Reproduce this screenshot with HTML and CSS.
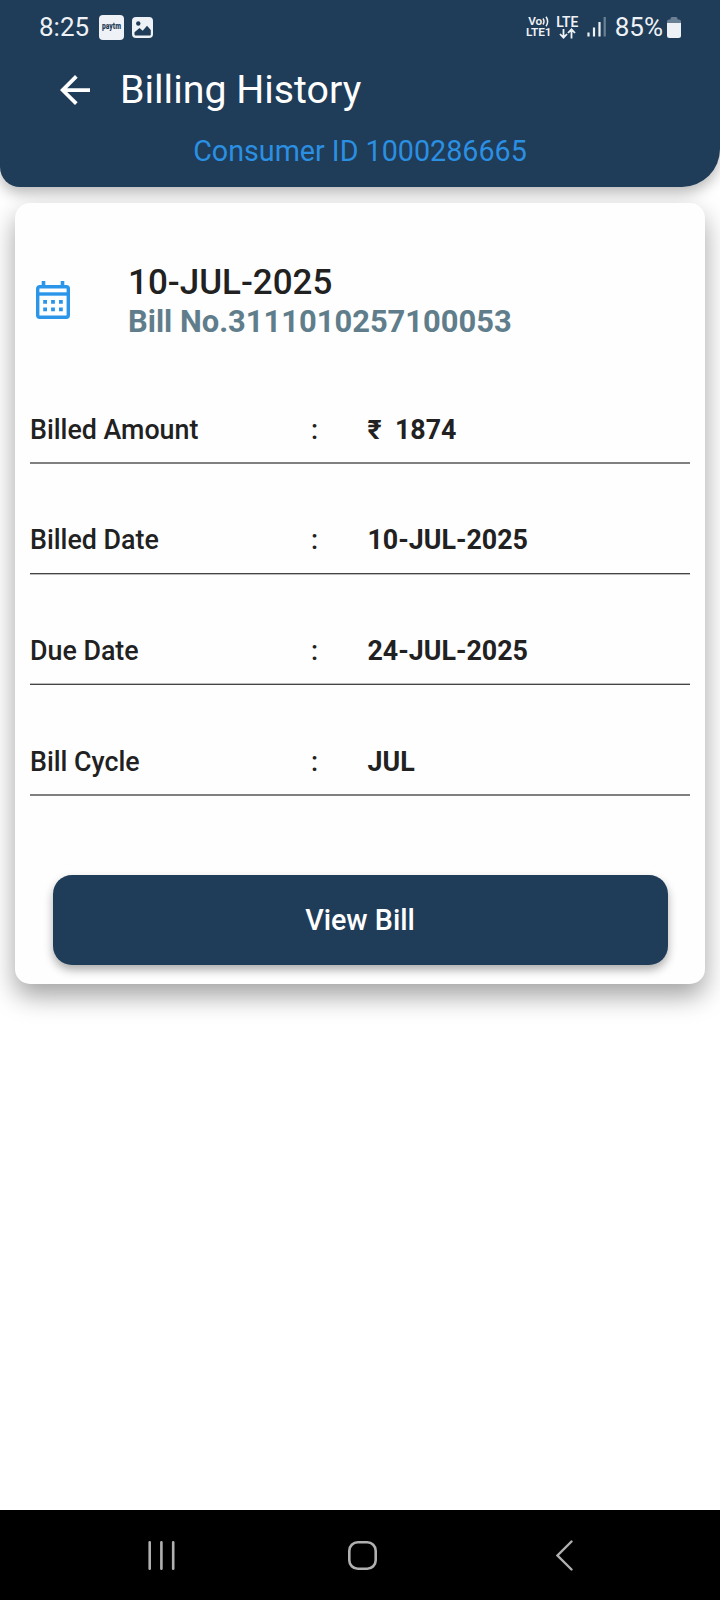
FILE: index.html
```html
<!DOCTYPE html>
<html lang="en">
<head>
    <meta charset="UTF-8">
    <meta name="viewport" content="width=device-width, initial-scale=1.0">
    <title>Billing History</title>
    <link rel="stylesheet" href="styles.css">
</head>

<body>
    <header class="header">
        <!-- Status bar -->
        <div class="status-bar">
            <span class="clock">8:25</span>
            <span class="app-badge"><span>paytm</span></span>
            <svg class="picture-icon" width="21" height="21" viewBox="0 0 21 21">
                <rect width="21" height="21" rx="4" fill="#eef2f6"/>
                <circle cx="6.3" cy="6.5" r="2.2" fill="#1f3c58"/>
                <path d="M2.5 17.5v-2.2l5-4.3 3.2 2.7 4.3-5 3.8 4.2v4.6q0 1-1 1h-14.3q-1 0-1-1z" fill="#1f3c58"/>
            </svg>
            <div class="network">
                <span class="volte">Vo<svg width="7" height="11" viewBox="0 0 7 11"><path d="M1 2.5q2 3 0 6M4 .8q3.300 4.700 0 9.400" fill="none" stroke="#eef2f6" stroke-width="1.500"/></svg></span>
                <span class="lte1">LTE1</span>
            </div>
            <div class="data">
                <span class="lte">LTE</span>
                <svg width="17" height="11" viewBox="0 0 17 11">
                    <path d="M4.500 1v8.500M1 6l3.500 3.700L8 6M12.500 10.500V1.500M9 5l3.500-3.700L16 5" fill="none" stroke="#eef2f6" stroke-width="1.800"/>
                </svg>
            </div>
            <svg class="signal" width="19" height="20" viewBox="0 0 19 20">
                <path d="M1.500 15.500v4M7 10.500v9M12.500 5v14.500" stroke="#eef2f6" stroke-width="2.200"/>
                <path d="M17.700 0v19.500" stroke="#6b8095" stroke-width="2.200"/>
            </svg>
            <span class="percent">85%</span>
            <svg class="battery" width="14" height="21" viewBox="0 0 14 21">
                <path d="M3.500 2.500v-1Q3.500 0 5 0h4q1.500 0 1.500 1.500v1H12q2 0 2 2V7H0V4.500q0-2 2-2z" fill="#6b8095"/>
                <path d="M0 6h14v12.500q0 2.500-2.500 2.500h-9Q0 21 0 18.500z" fill="#eef2f6"/>
            </svg>
        </div>

        <div class="title-bar">
            <svg class="back" width="30" height="30" viewBox="4 4 16 16">
                <path d="M20 11H7.830l5.590-5.590L12 4l-8 8 8 8 1.410-1.410L7.830 13H20v-2z" fill="#fff"/>
            </svg>
            <h1 class="title">Billing History</h1>
        </div>
        <p class="consumer">Consumer ID 1000286665</p>
    </header>

    <main class="card">
        <div class="bill-head">
            <svg class="calendar" width="34" height="38" viewBox="0 0 34 38">
                <path d="M7.500 0v6M26.500 0v6" stroke="#2b95ea" stroke-width="3.600"/>
                <rect x="1.700" y="5.700" width="30.600" height="30.600" rx="2" fill="none" stroke="#2b95ea" stroke-width="3.400"/>
                <path d="M3 13h28" stroke="#2b95ea" stroke-width="3.400"/>
                <path d="M7.200 20.800h19.600M7.200 28.300h19.600" stroke="#2b95ea" stroke-width="3.800" stroke-dasharray="3.800 4.100"/>
            </svg>
            <div class="bill-info">
                <div class="bill-date">10-JUL-2025</div>
                <div class="bill-no">Bill No.3111010257100053</div>
            </div>
        </div>

        <div class="row">
            <span class="label">Billed Amount</span>
            <span class="colon">:</span>
            <span class="value">₹&nbsp; 1874</span>
        </div>
        <div class="row line-top">
            <span class="label">Billed Date</span>
            <span class="colon">:</span>
            <span class="value">10-JUL-2025</span>
        </div>
        <div class="row line-bottom">
            <span class="label">Due Date</span>
            <span class="colon">:</span>
            <span class="value">24-JUL-2025</span>
        </div>
        <div class="row">
            <span class="label">Bill Cycle</span>
            <span class="colon">:</span>
            <span class="value">JUL</span>
        </div>

        <button class="view-bill">View Bill</button>
    </main>

    <!-- Android navigation -->
    <nav class="nav-bar">
        <svg class="recents" width="27" height="29" viewBox="0 0 27 29">
            <path d="M1.700 1.300v26.400M13.400 1.300v26.400M25.200 1.300v26.400" stroke="#b0b0b0" stroke-width="2.600" stroke-linecap="round"/>
        </svg>
        <svg class="home" width="29" height="29" viewBox="0 0 29 29">
            <rect x="1.300" y="1.300" width="26.400" height="26.400" rx="8.500" fill="none" stroke="#b0b0b0" stroke-width="2.600"/>
        </svg>
        <svg class="nav-back" width="17" height="31" viewBox="0 0 17 31">
            <path d="M15.500 1.500l-14 14 14 14" fill="none" stroke="#b0b0b0" stroke-width="2.400" stroke-linecap="round"/>
        </svg>
    </nav>
</body>
</html>
```
FILE: styles.css
```css
* {
    box-sizing: border-box;
}

body {
    margin: 0;
    height: 1600px;
    display: flex;
    flex-direction: column;
    background: #fff;
    color: #212121;
    font-family: Roboto, sans-serif;
}

/* Header */
.header {
    height: 187px;
    background: #1f3c58;
    border-radius: 0 0 38px 20px;
    box-shadow: 0 6px 14px rgba(0, 0, 0, 0.28);
}

.status-bar {
    height: 54px;
    padding: 0 39px;
    display: flex;
    align-items: center;
    color: #eef2f6;
    font-size: 26px;
}

.clock {
    width: 60px;
}

.app-badge {
    width: 25px;
    height: 25px;
    border-radius: 4px;
    background: #eef2f6;
    color: #1f3c58;
    font-size: 7.5px;
    font-weight: 900;
    line-height: 24px;
    text-align: center;
}

.app-badge span {
    display: block;
    transform: scale(0.9, 1.15);
}

.picture-icon {
    margin-left: 8px;
}

.network {
    width: 26px;
    margin-left: auto;
    font-size: 11.8px;
    font-weight: 600;
    line-height: 11px;
    text-align: center;
}

.network span {
    display: block;
    white-space: nowrap;
}

.volte svg {
    vertical-align: -2px;
}

.data {
    width: 23px;
    margin-left: 4px;
    font-size: 13.8px;
    font-weight: 600;
    line-height: 12px;
    text-align: center;
}

.data span,
.data svg {
    display: block;
    margin: 0 auto;
}

.signal {
    margin-left: 8px;
}

.percent {
    margin-left: 9px;
}

.battery {
    margin-left: 4px;
}

.title-bar {
    height: 71px;
    padding-left: 60px;
    display: flex;
    align-items: center;
}

.title {
    margin: 0 0 0 30px;
    font-size: 39.3px;
    font-weight: 400;
    color: #fff;
}

.consumer {
    margin: 9px 0 0;
    font-size: 28.7px;
    line-height: 35px;
    text-align: center;
    color: #2b8fe2;
}

/* Bill card */
.card {
    height: 781px;
    margin: 16px 15px 0;
    padding: 0 15px;
    border-radius: 15px;
    background: #fefefe;
    box-shadow: 0 12px 26px rgba(0, 0, 0, 0.37);
    display: flex;
    flex-direction: column;
}

.bill-head {
    height: 150.4px;
    padding: 58px 0 0 6px;
    display: flex;
}

.calendar {
    margin-top: 20px;
}

.bill-info {
    margin-left: 58px;
}

.bill-date {
    font-size: 35px;
    font-weight: 500;
    line-height: 43px;
}

.bill-no {
    font-size: 30.9px;
    font-weight: 700;
    line-height: 35px;
    color: #607d8b;
}

.row {
    height: 110.67px;
    padding-bottom: 16px;
    display: flex;
    align-items: flex-end;
    border-bottom: 2px solid #808080;
    font-size: 26.8px;
    line-height: 32px;
}

/* hairlines between pixels: one row strong, one row faint */
.line-top {
    padding-bottom: 18px;
    border-bottom: 1px solid #bbb;
    box-shadow: inset 0 -1px #444;
}

.line-bottom {
    padding-bottom: 17px;
    border-bottom: 1px solid #444;
    box-shadow: inset 0 -1px #bbb;
}

.label {
    width: 281px;
    font-weight: 500;
}

.colon {
    width: 56.5px;
    font-weight: 500;
}

.value {
    font-weight: 700;
}

.view-bill {
    height: 90px;
    margin: 79.2px 22.500px 0;
    border: none;
    border-radius: 19px;
    background: #1f3c58;
    box-shadow: 0 5px 10px rgba(0, 0, 0, 0.32);
    color: #fff;
    font-family: inherit;
    font-size: 28.7px;
    font-weight: 500;
}

/* Bottom navigation */
.nav-bar {
    height: 90px;
    margin-top: auto;
    padding-left: 148px;
    display: flex;
    align-items: center;
    background: #000;
}

.home {
    margin-left: 173px;
}

.nav-back {
    margin-left: 179px;
}
```
